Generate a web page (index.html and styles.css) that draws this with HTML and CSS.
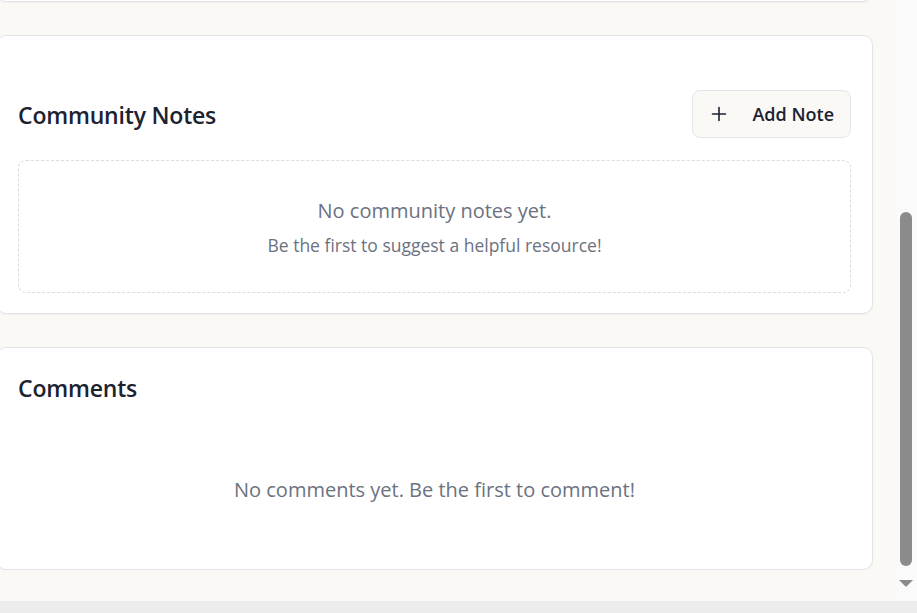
FILE: index.html
```html
<!DOCTYPE html>
<html lang="en">
<head>
<meta charset="utf-8">
<title>Community Notes</title>
<link rel="stylesheet" href="styles.css">
</head>
<body>
<div class="viewport">
  <main class="page">
    <section class="card card-stub"></section>

    <section class="card notes-card">
      <header class="card-header">
        <h2 class="card-title">Community Notes</h2>
        <button class="btn-add" type="button">
          <svg class="btn-icon" viewBox="0 0 16 16" width="16" height="16" aria-hidden="true">
            <path d="M8 1.5v13M1.5 8h13" fill="none" stroke="currentColor" stroke-width="1.6" stroke-linecap="round"/>
          </svg>
          <span>Add Note</span>
        </button>
      </header>
      <div class="empty-box">
        <p class="empty-title">No community notes yet.</p>
        <p class="empty-sub">Be the first to suggest a helpful resource!</p>
      </div>
    </section>

    <section class="card comments-card">
      <h2 class="card-title">Comments</h2>
      <p class="comments-empty">No comments yet. Be the first to comment!</p>
    </section>
  </main>
</div>

<div class="scrollbar-v" aria-hidden="true">
  <div class="scroll-thumb"></div>
  <div class="scroll-arrow"></div>
</div>
<div class="scrollbar-h" aria-hidden="true"></div>
</body>
</html>
```

FILE: styles.css
```css
* { box-sizing: border-box; }

html, body {
  margin: 0;
  padding: 0;
  height: 613px;
  overflow: hidden;
}

body {
  background: #faf9f6;
  font-family: "Open Sans", "Noto Sans", "Liberation Sans", sans-serif;
  color: #1f2430;
}

.viewport {
  width: 895px;
  overflow: hidden;
}

.page {
  display: flex;
  flex-direction: column;
  gap: 33px;
  margin-left: -4px;
  width: 877px;
  margin-top: -39px;
}

.card {
  background: #ffffff;
  border: 1px solid #e3e3e8;
  border-radius: 10px;
  box-shadow: 0 1px 2px rgba(0, 0, 0, 0.04);
}

.card-stub {
  height: 41px;
}

.notes-card {
  padding: 54px 21px 20px;
}

.card-header {
  display: flex;
  align-items: center;
  justify-content: space-between;
  margin-bottom: 22px;
}

.card-title {
  margin: 0;
  font-size: 23px;
  line-height: 32px;
  font-weight: 600;
  color: #1c2230;
  letter-spacing: -0.2px;
}

.card-header .card-title {
  padding-top: 2px;
}

.btn-add {
  display: flex;
  align-items: center;
  gap: 25px;
  height: 48px;
  padding: 0 16px 0 18px;
  background: #faf9f6;
  border: 1px solid #e6e6ea;
  border-radius: 8px;
  font-family: inherit;
  font-size: 18px;
  font-weight: 600;
  color: #1c2230;
  white-space: nowrap;
}

.btn-icon {
  flex: none;
}

.empty-box {
  border: 1px dashed #dcdce0;
  border-radius: 8px;
  padding: 36px 16px 35px;
  text-align: center;
  color: #6b7280;
}

.empty-title {
  margin: 0;
  font-size: 20px;
  line-height: 28px;
}

.empty-sub {
  margin: 8px 0 0;
  font-size: 17.5px;
  line-height: 24px;
}

.comments-card {
  padding: 24px 21px 25px;
}

.comments-empty {
  margin: 32px 0 0;
  padding: 40px 0;
  text-align: center;
  font-size: 20px;
  line-height: 28px;
  color: #6b7280;
}

.scrollbar-v {
  position: fixed;
  top: 0;
  right: 0;
  width: 22px;
  height: 601px;
  background: #fafafa;
}

.scroll-thumb {
  position: absolute;
  left: 5px;
  top: 212px;
  width: 12px;
  height: 354px;
  border-radius: 6px;
  background: #8b8b8b;
}

.scroll-arrow {
  position: absolute;
  left: 4px;
  top: 580px;
  width: 0;
  height: 0;
  border-left: 7px solid transparent;
  border-right: 7px solid transparent;
  border-top: 7px solid #8b8b8b;
}

.scrollbar-h {
  position: fixed;
  left: 0;
  bottom: 0;
  width: 917px;
  height: 12px;
  background: #ececec;
}
```
